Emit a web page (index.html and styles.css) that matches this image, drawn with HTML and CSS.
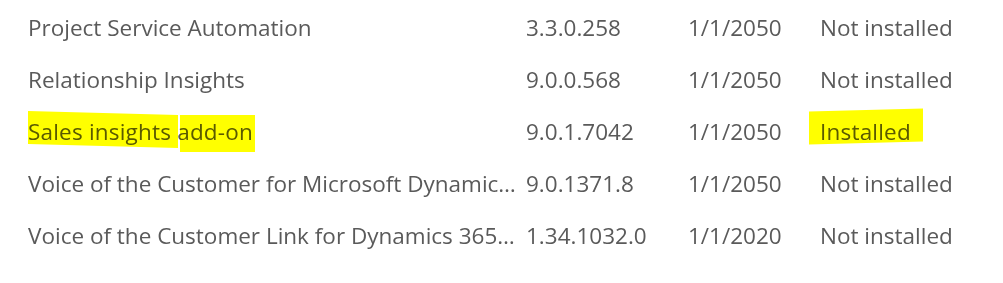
FILE: index.html
```html
<!DOCTYPE html>
<html>
<head>
<meta charset="utf-8">
<link rel="stylesheet" href="styles.css">
</head>
<body>
<div class="list">
  <div class="row">
    <div class="cell name">Project Service Automation</div>
    <div class="cell ver">3.3.0.258</div>
    <div class="cell date">1/1/2050</div>
    <div class="cell status">Not installed</div>
  </div>
  <div class="row">
    <div class="cell name">Relationship Insights</div>
    <div class="cell ver">9.0.0.568</div>
    <div class="cell date">1/1/2050</div>
    <div class="cell status">Not installed</div>
  </div>
  <div class="row">
    <div class="cell name marked"><span class="txt">Sales insights add-on</span><span class="hl hl-a"></span><span class="hl hl-b"></span></div>
    <div class="cell ver">9.0.1.7042</div>
    <div class="cell date">1/1/2050</div>
    <div class="cell status marked"><span class="txt">Installed</span><span class="hl hl-c"></span></div>
  </div>
  <div class="row">
    <div class="cell name">Voice of the Customer for Microsoft Dynamics 365</div>
    <div class="cell ver">9.0.1371.8</div>
    <div class="cell date">1/1/2050</div>
    <div class="cell status">Not installed</div>
  </div>
  <div class="row">
    <div class="cell name">Voice of the Customer Link for Dynamics 365 Customer Engagement</div>
    <div class="cell ver">1.34.1032.0</div>
    <div class="cell date">1/1/2020</div>
    <div class="cell status">Not installed</div>
  </div>
</div>
</body>
</html>
```
FILE: styles.css
```css
html, body {
  margin: 0;
  padding: 0;
  background: #ffffff;
}
body {
  font-family: "Open Sans", "Noto Sans", sans-serif;
  font-size: 22.5px;
  color: #5a5a5a;
}
.list {
  display: flex;
  flex-direction: column;
  padding-top: 2px;
}
.row {
  display: grid;
  grid-template-columns: 498px 162px 132px 1fr;
  height: 52px;
  align-items: center;
  padding-left: 28px;
}
.cell {
  white-space: nowrap;
  line-height: 32px;
  min-width: 0;
}
.name {
  overflow: hidden;
  text-overflow: ellipsis;
  padding-right: 8px;
}
.marked {
  position: relative;
  overflow: visible;
}
.txt {
  letter-spacing: 0.2px;
}
.hl {
  position: absolute;
  background: #ffff00;
  mix-blend-mode: multiply;
}
.hl-a {
  left: 0;
  width: 150px;
  top: -3px;
  height: 33px;
  transform: skewY(1.5deg);
}
.hl-b {
  left: 152px;
  width: 75px;
  top: -1px;
  height: 37px;
}
.hl-c {
  left: -11px;
  width: 114px;
  top: -6px;
  height: 33px;
  transform: skewY(-1.5deg);
}
```
